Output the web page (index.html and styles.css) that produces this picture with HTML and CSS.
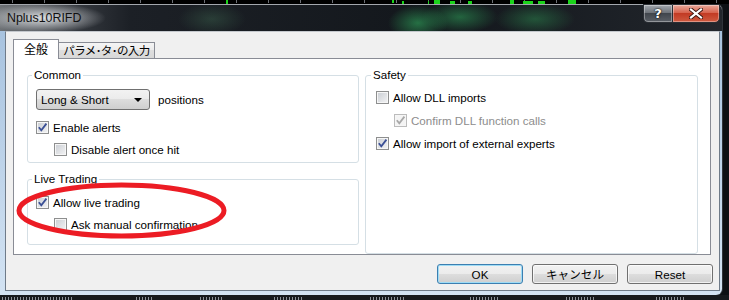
FILE: index.html
```html
<!DOCTYPE html>
<html lang="ja">
<head>
  <meta charset="UTF-8">
  <title>Nplus10RIFD</title>
  <link rel="stylesheet" href="styles.css">
</head>
<body>
  <div class="screen">
    <div class="chart-top"></div>

    <div class="window">
      <div class="titlebar">
        <span class="title">Nplus10RIFD</span>
        <div class="caption-buttons">
          <div class="cap cap-help">?</div>
          <div class="cap cap-close">
            <svg width="14" height="11" viewBox="0 0 14 11">
              <path d="M2 1.5 L12 9.5 M12 1.5 L2 9.5" stroke="#3a1510" stroke-width="4" stroke-linecap="square"/>
              <path d="M2 1.5 L12 9.5 M12 1.5 L2 9.5" stroke="#fff" stroke-width="2.2" stroke-linecap="square"/>
            </svg>
          </div>
        </div>
      </div>

      <div class="client">
        <div class="tabs">
          <div class="tab tab-active">全般</div>
          <div class="tab tab-params">パラメ･タ･の入力</div>
        </div>

        <div class="tab-panel">
          <div class="col">
            <fieldset class="group group-common">
              <legend>Common</legend>
              <div class="combo-row">
                <div class="combo">
                  <span>Long &amp; Short</span>
                  <span class="combo-arrow"></span>
                </div>
                <span>positions</span>
              </div>
              <div class="check">
                <span class="box"><svg viewBox="0 0 11 11"><path d="M1.8 5.2 L4.3 8.3 L9.4 1.6"/></svg></span>
                <span>Enable alerts</span>
              </div>
              <div class="check sub">
                <span class="box"></span>
                <span>Disable alert once hit</span>
              </div>
            </fieldset>

            <fieldset class="group group-live">
              <legend>Live Trading</legend>
              <div class="check">
                <span class="box"><svg viewBox="0 0 11 11"><path d="M1.8 5.2 L4.3 8.3 L9.4 1.6"/></svg></span>
                <span>Allow live trading</span>
              </div>
              <div class="check sub">
                <span class="box"></span>
                <span>Ask manual confirmation</span>
              </div>
            </fieldset>
          </div>

          <fieldset class="group group-safety">
            <legend>Safety</legend>
            <div class="check">
              <span class="box"></span>
              <span>Allow DLL imports</span>
            </div>
            <div class="check sub disabled">
              <span class="box"><svg viewBox="0 0 11 11"><path d="M1.8 5.2 L4.3 8.3 L9.4 1.6"/></svg></span>
              <span>Confirm DLL function calls</span>
            </div>
            <div class="check">
              <span class="box"><svg viewBox="0 0 11 11"><path d="M1.8 5.2 L4.3 8.3 L9.4 1.6"/></svg></span>
              <span>Allow import of external experts</span>
            </div>
          </fieldset>
        </div>

        <div class="buttons">
          <button class="btn btn-default">OK</button>
          <button class="btn">キャンセル</button>
          <button class="btn">Reset</button>
        </div>
      </div>
    </div>

    <div class="chart-bottom"></div>

    <!-- hand drawn mark -->
    <svg class="mark" width="729" height="300" viewBox="0 0 729 300">
      <ellipse cx="121.5" cy="210.5" rx="102.5" ry="25.5" fill="none" stroke="#ec1c24" stroke-width="5"/>
    </svg>
  </div>
</body>
</html>
```

FILE: styles.css
```css
* {
  box-sizing: border-box;
}

body {
  margin: 0;
  background: #0b0d10;
  font-family: "Liberation Sans", Arial, "Noto Sans CJK JP", sans-serif;
  font-size: 11.6px;
  color: #000;
}

.screen {
  position: relative;
  width: 729px;
  height: 300px;
  overflow: hidden;
  background: #0d1014;
}

/* chart behind the dialog */
.chart-top {
  height: 4px;
  background:
    linear-gradient(#1bd41b, #1bd41b) 226px 0 / 2px 4px no-repeat,
    linear-gradient(#1bd41b, #1bd41b) 392px 0 / 2px 3px no-repeat,
    linear-gradient(#1bd41b, #1bd41b) 402px 1px / 2px 3px no-repeat,
    linear-gradient(#1bd41b, #1bd41b) 428px 1px / 1px 3px no-repeat,
    linear-gradient(#1bd41b, #1bd41b) 434px 0 / 6px 4px no-repeat,
    linear-gradient(#1bd41b, #1bd41b) 450px 1px / 5px 3px no-repeat,
    linear-gradient(#1bd41b, #1bd41b) 468px 1px / 4px 3px no-repeat,
    linear-gradient(#1bd41b, #1bd41b) 510px 0 / 4px 4px no-repeat,
    linear-gradient(#1bd41b, #1bd41b) 523px 1px / 10px 3px no-repeat,
    linear-gradient(#1bd41b, #1bd41b) 538px 1px / 7px 3px no-repeat,
    linear-gradient(#1bd41b, #1bd41b) 568px 0 / 8px 4px no-repeat,
    repeating-linear-gradient(to right, transparent 0 12px, #6d7076 12px 13px, transparent 13px 32px) 0 0 / 100% 3px no-repeat,
    #000;
}

.chart-bottom {
  height: 5px;
  background:
    repeating-linear-gradient(to right, #8a9098 0 1px, transparent 1px 3px) 2px 2px / 70px 3px no-repeat,
    repeating-linear-gradient(to right, #8a9098 0 1px, transparent 1px 3px) 136px 2px / 18px 3px no-repeat,
    repeating-linear-gradient(to right, #8a9098 0 1px, transparent 1px 3px) 200px 2px / 24px 3px no-repeat,
    repeating-linear-gradient(to right, #8a9098 0 1px, transparent 1px 3px) 274px 2px / 30px 3px no-repeat,
    repeating-linear-gradient(to right, #8a9098 0 1px, transparent 1px 3px) 370px 2px / 34px 3px no-repeat,
    repeating-linear-gradient(to right, #8a9098 0 1px, transparent 1px 3px) 470px 2px / 30px 3px no-repeat,
    repeating-linear-gradient(to right, #8a9098 0 1px, transparent 1px 3px) 566px 2px / 30px 3px no-repeat,
    repeating-linear-gradient(to right, #8a9098 0 1px, transparent 1px 3px) 656px 2px / 30px 3px no-repeat,
    #16191d;
}

.window {
  display: flex;
  flex-direction: column;
  width: 722px;
  height: 291px;
  border-radius: 0 6px 6px 0;
  background: linear-gradient(to bottom, #63676c 0, #2c3036 27px, #a8c3df 27px, #d3e3f3 100%);
  box-shadow: 1px 0 0 #2f343a, 0 1px 0 #2f343a;
}

.titlebar {
  display: flex;
  align-items: flex-start;
  height: 27px;
  border-top: 1px solid #a3a7ad;
  border-radius: 0 6px 0 0;
  background:
    radial-gradient(ellipse 62px 15px at 44px 13px, rgba(236, 239, 242, 0.9), rgba(236, 239, 242, 0)),
    radial-gradient(ellipse 34px 16px at 212px 14px, rgba(70, 120, 90, 0.35), rgba(70, 120, 90, 0)),
    radial-gradient(ellipse 30px 18px at 418px 18px, rgba(45, 150, 85, 0.7), rgba(45, 150, 85, 0)),
    radial-gradient(ellipse 38px 16px at 460px 12px, rgba(45, 150, 85, 0.6), rgba(45, 150, 85, 0)),
    radial-gradient(ellipse 40px 16px at 535px 14px, rgba(45, 140, 80, 0.5), rgba(45, 140, 80, 0)),
    linear-gradient(to right, #6e7276 0, #3e4248 55px, #1c2026 130px, #13171c 60%, #22262c 100%);
}

.title {
  padding-left: 7px;
  line-height: 26px;
  font-family: "Liberation Sans", Arial, sans-serif;
  font-size: 12.4px;
  color: #111;
}

.caption-buttons {
  display: flex;
  margin: -1px 2px 0 auto;
}

.cap {
  display: flex;
  align-items: center;
  justify-content: center;
  height: 19px;
  border: 1px solid #2a2e34;
  box-shadow: inset 0 0 0 1px rgba(255, 255, 255, 0.35);
}

.cap-help {
  width: 29px;
  border-radius: 0 0 0 5px;
  border-right: none;
  background: linear-gradient(#a2a7ad, #6f747b 45%, #41464d 50%, #5b6067 100%);
  color: #fff;
  font-family: "DejaVu Sans", sans-serif;
  font-weight: bold;
  font-size: 13px;
  text-shadow: 0 0 2px #000, 0 0 1px #000;
}

.cap-close {
  width: 48px;
  border-radius: 0 0 5px 0;
  background: linear-gradient(#e8a89a, #d7644f 45%, #c23b24 50%, #cf5a40 100%);
}

.client {
  display: flex;
  flex-direction: column;
  height: 260px;
  margin: 0 2px 0 5px;
  border: 1px solid #6f7b89;
  border-top-color: #c4c8cd;
  background: #f0f0f0;
}

.tabs {
  position: relative;
  z-index: 1;
  display: flex;
  align-items: flex-end;
  height: 19px;
  margin: 7px 0 0 7px;
}

.tab {
  height: 16px;
  border: 1px solid #898c95;
  border-bottom: none;
  background: linear-gradient(#f5f5f5, #ebebeb 50%, #dedede 50%, #d8d8d8);
  font-family: "Noto Sans CJK JP", sans-serif;
  font-size: 11.5px;
  line-height: 15px;
  text-align: center;
  white-space: nowrap;
}

.tab-active {
  position: relative;
  z-index: 2;
  width: 46px;
  height: 20px;
  margin-bottom: -1px;
  background: #fff;
  font-size: 12px;
  line-height: 18px;
}

.tab-params {
  width: 97px;
  margin-left: -1px;
  letter-spacing: -0.6px;
}

.tab-panel {
  display: grid;
  grid-template-columns: 332px 333px;
  column-gap: 6px;
  height: 197px;
  margin: 0 8px 0 7px;
  padding: 9px 0 0 13px;
  border: 1px solid #898c95;
  background: #fff;
}

.col {
  display: flex;
  flex-direction: column;
}

.group {
  min-width: 0;
  margin: 0;
  padding: 0 8px;
  border: 1px solid #d5dfe5;
  border-radius: 3px;
}

.group legend {
  margin-left: -4px;
  padding: 0 2px;
  line-height: 14px;
}

.group-common {
  padding-top: 7px;
  padding-bottom: 2px;
}

.group-live {
  margin-top: 9px;
  padding-top: 5px;
  padding-bottom: 9px;
}

.group-safety {
  padding: 4px 10px 0;
}

.group-safety legend {
  margin-left: -5px;
}

.combo-row {
  display: flex;
  align-items: center;
  gap: 8px;
  margin-bottom: 6px;
}

.combo {
  display: flex;
  align-items: center;
  width: 114px;
  height: 21px;
  padding: 0 4px 0 4px;
  border: 1px solid #707070;
  border-radius: 3px;
  background: linear-gradient(#f2f2f2, #ebebeb 50%, #dddddd 50%, #cfcfcf);
}

.combo-arrow {
  width: 0;
  height: 0;
  margin: 1px 3px 0 auto;
  border-left: 4px solid transparent;
  border-right: 4px solid transparent;
  border-top: 4px solid #000;
}

.check {
  display: flex;
  align-items: center;
  gap: 4px;
  height: 22px;
  white-space: nowrap;
}

.group-safety .check {
  height: 23px;
}

.check.sub {
  margin-left: 18px;
}

.box {
  display: flex;
  align-items: center;
  justify-content: center;
  flex: none;
  width: 13px;
  height: 13px;
  border: 1px solid #8e8f8f;
  background: linear-gradient(135deg, #c9cdd3, #f4f4f5);
  box-shadow: inset 0 0 0 1px #f6f6f6;
}

.box svg {
  width: 11px;
  height: 11px;
}

.box svg path {
  fill: none;
  stroke: #3a4f95;
  stroke-width: 1.8;
}

.disabled {
  color: #8d8d8d;
}

.disabled .box {
  border-color: #bcbcbc;
  background: #f4f4f4;
}

.disabled .box svg path {
  stroke: #a8a8a8;
}

.buttons {
  display: flex;
  justify-content: flex-end;
  gap: 9px;
  margin: 9px 6px 0 0;
}

.btn {
  width: 86px;
  height: 20px;
  padding: 0;
  border: 1px solid #707070;
  border-radius: 3px;
  background: linear-gradient(#f2f2f2, #ebebeb 50%, #dddddd 50%, #cfcfcf);
  box-shadow: inset 0 0 0 1px rgba(255, 255, 255, 0.7);
  font-family: "Liberation Sans", Arial, "Noto Sans CJK JP", sans-serif;
  font-size: 11.6px;
  color: #000;
}

.btn-default {
  border-color: #3c7fb1;
  box-shadow: inset 0 0 0 1px #9fdcf5;
}

.mark {
  position: absolute;
  top: 0;
  left: 0;
  pointer-events: none;
}
```
